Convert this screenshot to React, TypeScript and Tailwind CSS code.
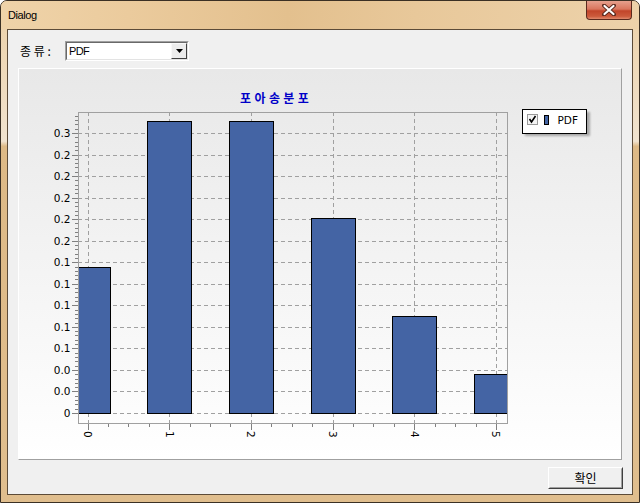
import React from "react";

const cx = (i: number) => 87.5 + 81.7 * i;
const tops = [267, 121, 121, 218, 316, 374];
const yLabels = ["0", "0.0", "0.0", "0.1", "0.1", "0.1", "0.1", "0.1", "0.2", "0.2", "0.2", "0.2", "0.2", "0.3"];
const step = 21.538;

function Chart() {
  const hLines = yLabels.map((_, k) => Math.round(413 - k * step) + 0.5);
  const minorY: { m: number; y: number }[] = [];
  for (let m = 0; m <= 69; m++) minorY.push({ m, y: Math.round(413 - m * (step / 5)) + 0.5 });
  const minorX: { n: number; x: number }[] = [];
  for (let n = 0; n <= 20; n++) minorX.push({ n, x: Math.round(87.5 + n * 20.425) + 0.5 });
  return (
    <svg width={602} height={390} viewBox="19 69 602 390" className="block" shapeRendering="crispEdges">
      <defs>
        <clipPath id="plot">
          <rect x={78} y={112} width={429} height={311} />
        </clipPath>
        <filter id="blur" x="-20%" y="-20%" width="140%" height="140%">
          <feGaussianBlur stdDeviation="1.2" />
        </filter>
      </defs>
      <text
        x={240}
        y={103}
        fill="#0000c8"
        fontFamily="'Noto Sans CJK KR', sans-serif"
        fontWeight={700}
        fontSize={12}
        letterSpacing={3.4}
        shapeRendering="auto"
      >
        포아송분포
      </text>
      {hLines.map((y, k) => (
        <line key={"h" + k} x1={78} x2={507} y1={y} y2={y} stroke="#a0a0a0" strokeDasharray="4 3" />
      ))}
      {[0, 1, 2, 3, 4, 5].map((i) => (
        <line key={"v" + i} x1={Math.round(cx(i)) + 0.5} x2={Math.round(cx(i)) + 0.5} y1={112} y2={423} stroke="#a0a0a0" strokeDasharray="4 3" />
      ))}
      <g clipPath="url(#plot)">
        {tops.map((t, i) => (
          <rect
            key={"b" + i}
            x={Math.round(cx(i) - 22) + 0.5}
            y={t + 0.5}
            width={44}
            height={413 - t}
            fill="#4464a4"
            stroke="#000"
            strokeWidth={1}
          />
        ))}
      </g>
      <rect x={78.5} y={112.5} width={429} height={311} fill="none" stroke="#a0a0a0" />
      {minorY.map(({ m, y }) => (
        <line key={"yt" + m} x1={m % 5 === 0 && m <= 65 ? 72 : 75} x2={78} y1={y} y2={y} stroke="#808080" />
      ))}
      {minorX.map(({ n, x }) => (
        <line key={"xt" + n} x1={x} x2={x} y1={424} y2={n % 4 === 0 ? 430 : 427} stroke="#808080" />
      ))}
      {yLabels.map((l, k) => (
        <text
          key={"yl" + k}
          x={70.5}
          y={413 - k * step + 4}
          textAnchor="end"
          fontFamily="'DejaVu Sans', sans-serif"
          fontSize={10.5}
          fill="#000"
          shapeRendering="auto"
        >
          {l}
        </text>
      ))}
      {[0, 1, 2, 3, 4, 5].map((i) => (
        <text
          key={"xl" + i}
          transform={`translate(${cx(i) - 3.6} 431) rotate(90)`}
          fontFamily="'DejaVu Sans', sans-serif"
          fontSize={10.5}
          fill="#000"
          shapeRendering="auto"
        >
          {i}
        </text>
      ))}
      <rect x={525} y={112} width={65} height={24} fill="#8a8a8a" opacity={0.7} filter="url(#blur)" />
      <rect x={522.5} y={109.5} width={64} height={24} fill="#fff" stroke="#000" />
      <rect x={527.5} y={114.5} width={10} height={10} fill="#f4f4f4" stroke="#9a9a9a" />
      <path d="M529.5 119 L531.5 122 L535.5 116" fill="none" stroke="#000" strokeWidth={1.6} shapeRendering="auto" />
      <rect x={544.5} y={115.5} width={4} height={9} fill="#4464a4" stroke="#000" />
      <text x={557.5} y={124} fontFamily="'DejaVu Sans', sans-serif" fontSize={10.5} fill="#000" shapeRendering="auto">
        PDF
      </text>
    </svg>
  );
}

export default function App() {
  return (
    <div
      className="w-[640px] h-[503px] flex flex-col border border-[#3b3024] rounded-t-[7px] overflow-hidden"
      style={{
        background:
          "linear-gradient(to bottom, #ecd0a6 0%, #f1e3cf 28%, #ddb986 29%, #e0be8e 100%)",
      }}
    >
      <div
        className="h-[28px] flex items-start shrink-0"
        style={{
          background:
            "linear-gradient(to right, #efd3a9 0%, #ebcb9d 20%, #e3c08e 45%, #e8c89a 65%, #edd2aa 100%)",
        }}
      >
        <div
          className="pl-[7px] pt-[6px] text-[11px] tracking-[-0.4px] text-black"
          style={{ fontFamily: "'Liberation Sans', Arial, sans-serif" }}
        >
          Dialog
        </div>
        <div
          className="ml-auto mr-[7px] w-[46px] h-[19px] rounded-b-[4px] border border-t-0 border-[#5a2a1e] flex items-center justify-center"
          style={{
            background:
              "linear-gradient(to bottom, #e6a08d 0%, #d9765e 45%, #c2452a 55%, #cc5a3c 85%, #e08a6c 100%)",
          }}
        >
          <svg width="14" height="12" viewBox="0 0 14 12">
            <path d="M2 1.5 L12 10.5 M12 1.5 L2 10.5" stroke="#5a2a1e" strokeWidth="4" strokeLinecap="round" />
            <path d="M2.5 2 L11.5 10 M11.5 2 L2.5 10" stroke="#ffffff" strokeWidth="2.2" strokeLinecap="round" />
          </svg>
        </div>
      </div>
      <div className="flex-1 mx-[6px] mb-[7px] border border-[#5c4b38] bg-[#f0f0f0] flex flex-col">
        <div className="flex items-center mt-[11px] pl-[12px]">
          <span
            className="w-[45px] text-[12px] leading-[20px] text-black"
            style={{ fontFamily: "'Noto Sans CJK KR', sans-serif" }}
          >
            종 류 :
          </span>
          <div className="w-[124px] h-[20px] border border-t-[#a0a0a0] border-l-[#a0a0a0] border-b-white border-r-white">
            <div className="w-full h-full border border-t-[#696969] border-l-[#696969] border-b-[#e3e3e3] border-r-[#e3e3e3] bg-white flex items-center">
              <span
                className="pl-[2px] text-[11px] tracking-[-0.6px] text-black flex-1"
                style={{ fontFamily: "'Liberation Sans', Arial, sans-serif" }}
              >
                PDF
              </span>
              <div className="w-[16px] h-[16px] bg-[#ececec] border border-t-[#f8f8f8] border-l-[#f8f8f8] border-b-[#404040] border-r-[#404040] flex items-center justify-center">
                <svg width="7" height="4" viewBox="0 0 7 4">
                  <path d="M0 0 H7 L3.5 4 Z" fill="#000" />
                </svg>
              </div>
            </div>
          </div>
        </div>
        <div
          className="mt-[7px] mx-[10px] h-[392px] border border-t-white border-l-white border-r-[#a0a0a0] border-b-[#a0a0a0]"
          style={{ background: "linear-gradient(to bottom, #e8e8e8 0%, #ffffff 100%)" }}
        >
          <Chart />
        </div>
        <div className="flex justify-end mt-[7px] mr-[9px]">
          <button className="w-[75px] h-[22px] bg-[#f0f0f0] border border-t-white border-l-white border-b-[#404040] border-r-[#404040] p-0">
            <div
              className="w-full h-full border border-t-[#f0f0f0] border-l-[#f0f0f0] border-b-[#a0a0a0] border-r-[#a0a0a0] flex items-center justify-center text-[12px] text-black"
              style={{ fontFamily: "'Noto Sans CJK KR', sans-serif" }}
            >
              확인
            </div>
          </button>
        </div>
      </div>
    </div>
  );
}
